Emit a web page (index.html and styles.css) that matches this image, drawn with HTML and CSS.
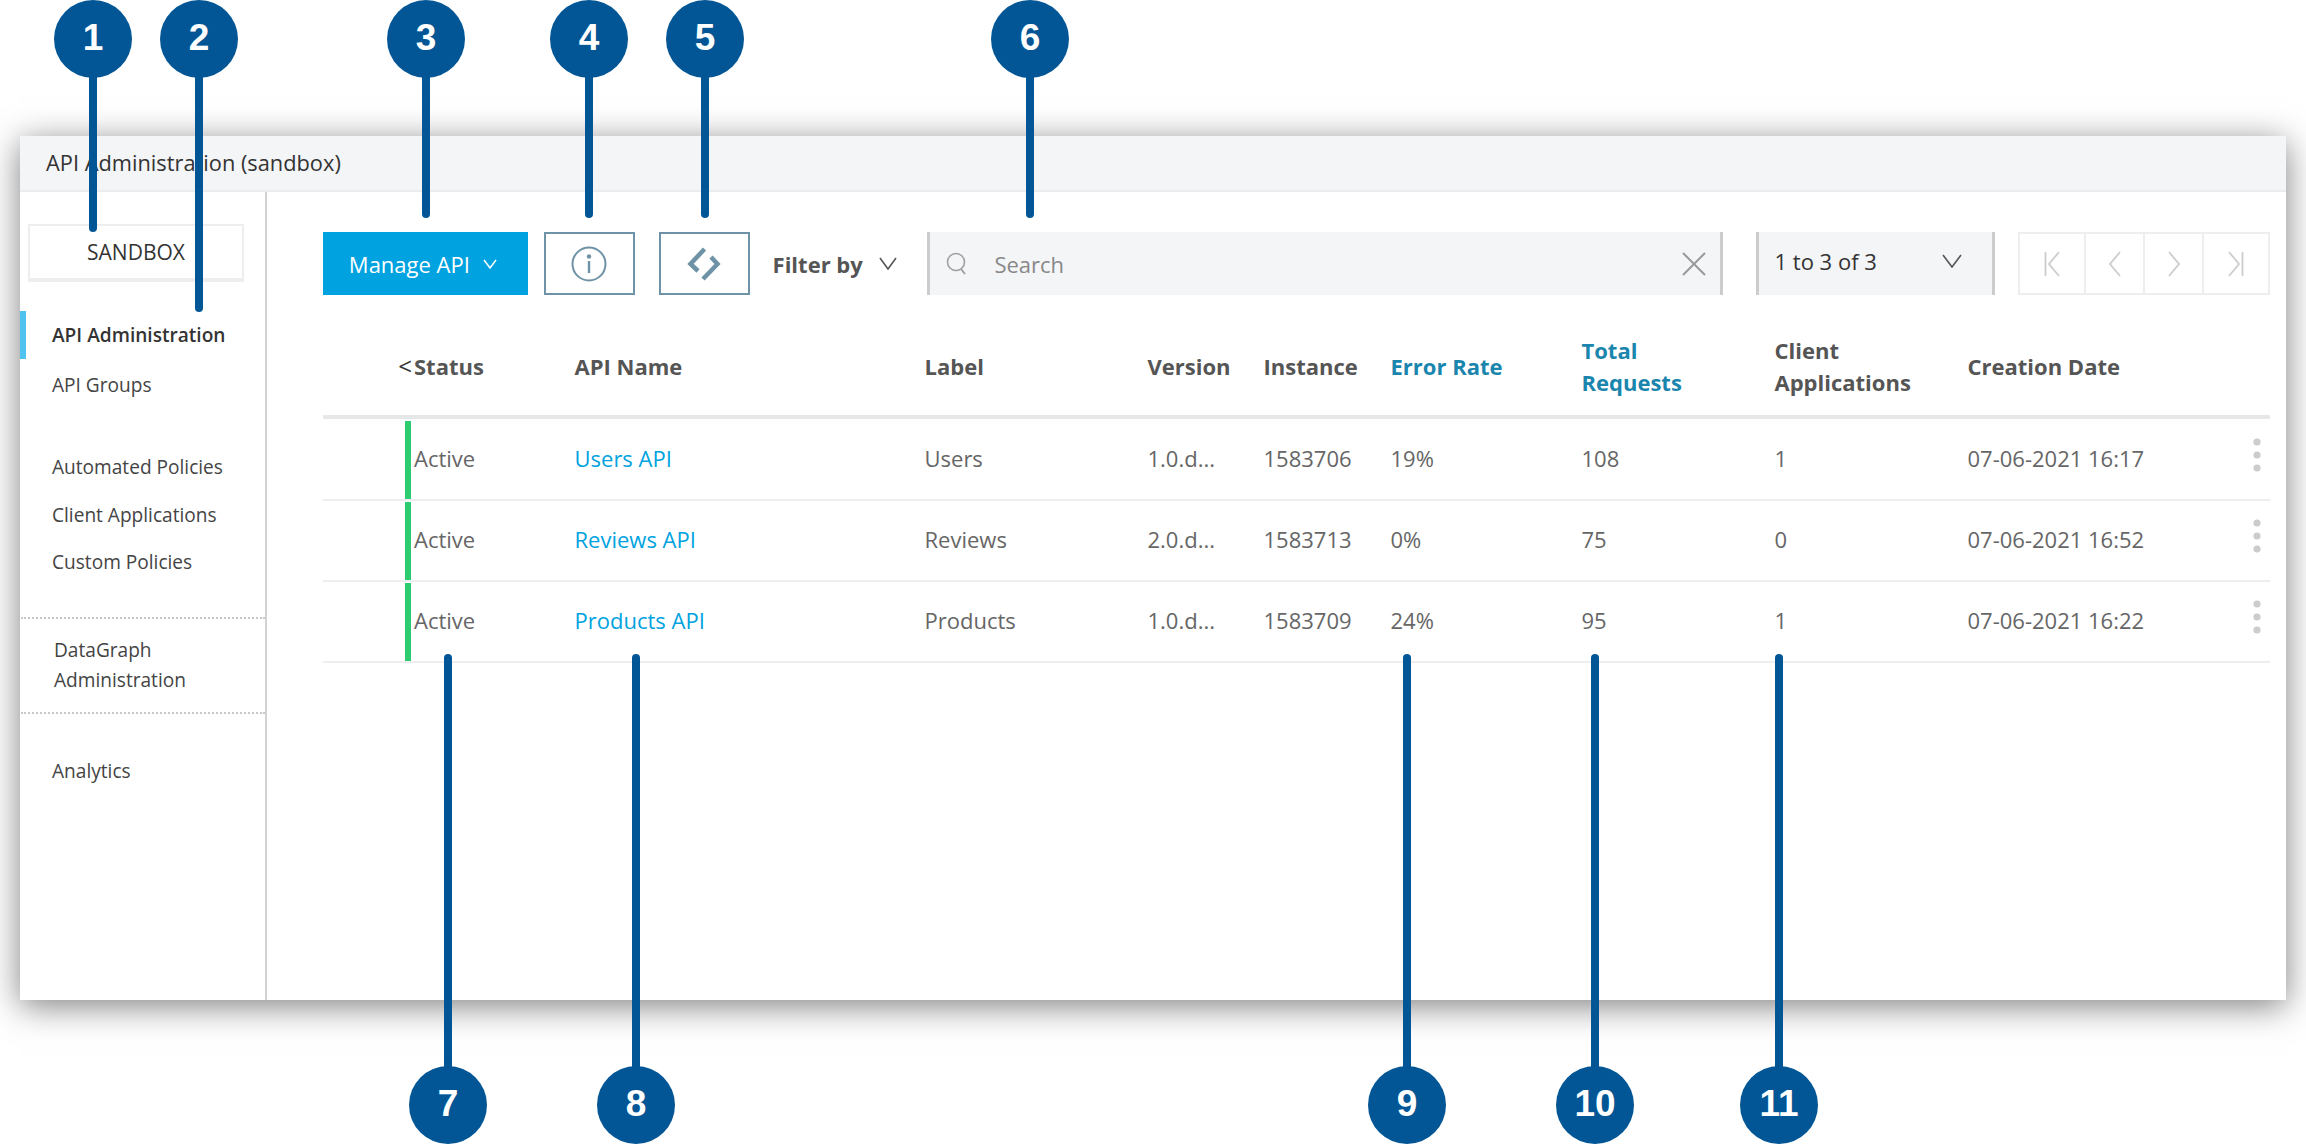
FILE: index.html
```html
<!DOCTYPE html>
<html lang="en">
<head>
    <meta charset="UTF-8">
    <title>API Administration (sandbox)</title>
    <link rel="stylesheet" href="styles.css">
</head>
<body>
    <div class="window">
        <div class="title-bar">API Administration (sandbox)</div>
        <div class="window-body">
            <nav class="sidebar">
                <div class="env-box">SANDBOX</div>
                <ul class="nav-group nav-group-first">
                    <li class="nav-item active">API Administration</li>
                    <li class="nav-item">API Groups</li>
                </ul>
                <ul class="nav-group nav-group-policies">
                    <li class="nav-item">Automated Policies</li>
                    <li class="nav-item">Client Applications</li>
                    <li class="nav-item">Custom Policies</li>
                </ul>
                <div class="nav-datagraph">DataGraph<br>Administration</div>
                <div class="nav-analytics">Analytics</div>
            </nav>

            <main class="content">
                <div class="toolbar">
                    <button class="manage-btn" type="button">
                        Manage API
                        <svg width="14" height="10" viewBox="0 0 14 10"><path d="M1 1l6 8 6-8" fill="none" stroke="#fff" stroke-width="1.5"/></svg>
                    </button>
                    <button class="icon-btn" type="button">
                        <svg width="36" height="36" viewBox="0 0 36 36">
                            <circle cx="18" cy="18" r="16.5" fill="none" stroke="#6f93a6" stroke-width="2"/>
                            <circle cx="18" cy="10.5" r="2.2" fill="#6f93a6"/>
                            <path d="M18 15v12" stroke="#6f93a6" stroke-width="2.4"/>
                        </svg>
                    </button>
                    <button class="icon-btn code-btn" type="button">
                        <svg width="36" height="36" viewBox="0 0 36 36">
                            <path d="M18.5 3L4.5 18l7.5 7M25 11l6.5 7L17 33" fill="none" stroke="#6f93a6" stroke-width="4.5"/>
                        </svg>
                    </button>
                    <div class="filter-by">
                        Filter by
                        <svg width="18" height="13" viewBox="0 0 18 13"><path d="M1 1l8 11 8-11" fill="none" stroke="#555" stroke-width="1.6"/></svg>
                    </div>
                    <div class="search">
                        <svg class="search-icon" width="22" height="24" viewBox="0 0 22 24">
                            <circle cx="10" cy="10" r="8.5" fill="none" stroke="#a0a0a0" stroke-width="1.6"/>
                            <path d="M15 17l4 5" stroke="#a0a0a0" stroke-width="2"/>
                        </svg>
                        <span class="search-text">Search</span>
                        <svg width="24" height="24" viewBox="0 0 24 24"><path d="M1 1l22 22M23 1L1 23" stroke="#999" stroke-width="2"/></svg>
                    </div>
                    <div class="page-select">
                        <span>1 to 3 of 3</span>
                        <svg width="20" height="14" viewBox="0 0 20 14"><path d="M1 1l9 12 9-12" fill="none" stroke="#555" stroke-width="1.6"/></svg>
                    </div>
                    <div class="pager">
                        <div class="pager-cell pager-first">
                            <svg width="16" height="26" viewBox="0 0 16 26"><path d="M1.5 1v24M15 1L5 13l10 12" fill="none" stroke="#ccc" stroke-width="1.8"/></svg>
                        </div>
                        <div class="pager-cell">
                            <svg width="12" height="26" viewBox="0 0 12 26"><path d="M11 1L1 13l10 12" fill="none" stroke="#ccc" stroke-width="1.8"/></svg>
                        </div>
                        <div class="pager-cell">
                            <svg width="12" height="26" viewBox="0 0 12 26"><path d="M1 1l10 12L1 25" fill="none" stroke="#ccc" stroke-width="1.8"/></svg>
                        </div>
                        <div class="pager-cell pager-last">
                            <svg width="16" height="26" viewBox="0 0 16 26"><path d="M14.5 1v24M1 1l10 12L1 25" fill="none" stroke="#ccc" stroke-width="1.8"/></svg>
                        </div>
                    </div>
                </div>

                <div class="table-head">
                    <div class="sort-mark">&lt;</div>
                    <div>Status</div>
                    <div>API Name</div>
                    <div>Label</div>
                    <div>Version</div>
                    <div>Instance</div>
                    <div class="sorted">Error Rate</div>
                    <div class="sorted">Total<br>Requests</div>
                    <div>Client<br>Applications</div>
                    <div>Creation Date</div>
                </div>

                <div class="table-row">
                    <div></div>
                    <div class="status">Active</div>
                    <div class="api-link">Users API</div>
                    <div>Users</div>
                    <div>1.0.d...</div>
                    <div>1583706</div>
                    <div>19%</div>
                    <div>108</div>
                    <div>1</div>
                    <div class="date-cell">07-06-2021 16:17
                        <svg class="dots" width="8" height="34" viewBox="0 0 8 34"><circle cx="4" cy="4" r="3.6"/><circle cx="4" cy="17" r="3.6"/><circle cx="4" cy="30" r="3.6"/></svg>
                    </div>
                </div>
                <div class="table-row">
                    <div></div>
                    <div class="status">Active</div>
                    <div class="api-link">Reviews API</div>
                    <div>Reviews</div>
                    <div>2.0.d...</div>
                    <div>1583713</div>
                    <div>0%</div>
                    <div>75</div>
                    <div>0</div>
                    <div class="date-cell">07-06-2021 16:52
                        <svg class="dots" width="8" height="34" viewBox="0 0 8 34"><circle cx="4" cy="4" r="3.6"/><circle cx="4" cy="17" r="3.6"/><circle cx="4" cy="30" r="3.6"/></svg>
                    </div>
                </div>
                <div class="table-row">
                    <div></div>
                    <div class="status">Active</div>
                    <div class="api-link">Products API</div>
                    <div>Products</div>
                    <div>1.0.d...</div>
                    <div>1583709</div>
                    <div>24%</div>
                    <div>95</div>
                    <div>1</div>
                    <div class="date-cell">07-06-2021 16:22
                        <svg class="dots" width="8" height="34" viewBox="0 0 8 34"><circle cx="4" cy="4" r="3.6"/><circle cx="4" cy="17" r="3.6"/><circle cx="4" cy="30" r="3.6"/></svg>
                    </div>
                </div>
            </main>
        </div>
    </div>

    <!-- numbered callouts over the screenshot -->
    <div class="pin pin-1"><span class="pin-num">1</span><span class="pin-line"></span></div>
    <div class="pin pin-2"><span class="pin-num">2</span><span class="pin-line"></span></div>
    <div class="pin pin-3"><span class="pin-num">3</span><span class="pin-line"></span></div>
    <div class="pin pin-4"><span class="pin-num">4</span><span class="pin-line"></span></div>
    <div class="pin pin-5"><span class="pin-num">5</span><span class="pin-line"></span></div>
    <div class="pin pin-6"><span class="pin-num">6</span><span class="pin-line"></span></div>
    <div class="pin pin-up pin-7"><span class="pin-line"></span><span class="pin-num">7</span></div>
    <div class="pin pin-up pin-8"><span class="pin-line"></span><span class="pin-num">8</span></div>
    <div class="pin pin-up pin-9"><span class="pin-line"></span><span class="pin-num">9</span></div>
    <div class="pin pin-up pin-10"><span class="pin-line"></span><span class="pin-num">10</span></div>
    <div class="pin pin-up pin-11"><span class="pin-line"></span><span class="pin-num">11</span></div>
</body>
</html>
```

FILE: styles.css
```css
html, body {
    height: 100%;
}

body {
    margin: 0;
    position: relative;
    overflow: hidden;
    background-color: #ffffff;
    font-family: "Open Sans", "Noto Sans", sans-serif;
    font-size: 22px;
    color: #666666;
}

.window {
    margin: 136px 20px 0;
    height: 864px;
    background-color: #ffffff;
    box-shadow: 0 6px 32px rgba(0, 0, 0, 0.5);
    display: flex;
    flex-direction: column;
}

.title-bar {
    height: 54px;
    flex: none;
    padding-left: 26px;
    line-height: 54px;
    font-size: 21.8px;
    background-color: #f4f5f7;
    border-bottom: 2px solid #ebecee;
    color: #333333;
}

.window-body {
    flex: 1;
    display: flex;
}

/* sidebar */
.sidebar {
    width: 245px;
    flex: none;
    border-right: 2px solid #d2d2d2;
    color: #444444;
    font-size: 19.1px;
}

.env-box {
    width: 212px;
    height: 52px;
    margin: 32px 0 0 8px;
    border: 2px solid #eeeeee;
    border-bottom-width: 4px;
    text-align: center;
    line-height: 53px;
    font-size: 21px;
    color: #333333;
}

.nav-group {
    list-style: none;
    margin: 0;
    padding: 0;
}

.nav-group-first {
    margin-top: 29px;
}

.nav-group-policies {
    margin-top: 35px;
}

.nav-item {
    padding-left: 32px;
    height: 48px;
    line-height: 48px;
}

.nav-group-policies .nav-item {
    height: 47.5px;
    line-height: 47.5px;
}

.nav-item.active {
    border-left: 6px solid #4fc3f0;
    padding-left: 26px;
    font-weight: 600;
    color: #333333;
    margin-bottom: 2px;
}

.nav-datagraph {
    margin: 30px 0 0 1px;
    padding: 16px 0 17px 33px;
    line-height: 30px;
    border-top: 2px dotted #c8c8c8;
    border-bottom: 2px dotted #c8c8c8;
}

.nav-analytics {
    margin-top: 42px;
    padding-left: 32px;
    line-height: 30px;
}

/* main area */
.content {
    flex: 1;
    padding: 40px 16px 0 56px;
    min-width: 0;
}

.toolbar {
    display: flex;
    height: 63px;
}

.toolbar button {
    font-family: inherit;
    padding: 0;
    margin: 0;
}

.manage-btn {
    width: 205px;
    border: none;
    background-color: #00a3e0;
    color: #ffffff;
    font-size: 22px;
    display: flex;
    align-items: center;
    justify-content: center;
    gap: 13px;
    padding-right: 5px !important;
}

.icon-btn {
    width: 91px;
    margin-left: 16px !important;
    border: 2px solid #6f93a6;
    background-color: #ffffff;
    display: flex;
    align-items: center;
    justify-content: center;
}

.code-btn {
    margin-left: 24px !important;
}

.filter-by {
    margin-left: 23px;
    width: 155px;
    display: flex;
    align-items: center;
    gap: 16px;
    font-weight: 700;
    color: #555555;
}

.search {
    width: 796px;
    box-sizing: border-box;
    display: flex;
    align-items: center;
    padding: 0 14px 0 16px;
    background-color: #f4f5f7;
    border-left: 3px solid #cccccc;
    border-right: 3px solid #cccccc;
}

.search-text {
    flex: 1;
    margin-left: 26px;
    color: #888888;
}

.page-select {
    width: 240px;
    margin-left: 33px;
    box-sizing: border-box;
    display: flex;
    align-items: center;
    justify-content: space-between;
    padding: 0 30px 6px 16px;
    background-color: #f4f5f7;
    border-left: 3px solid #cccccc;
    border-right: 3px solid #cccccc;
    color: #333333;
}

.pager {
    width: 252px;
    margin-left: 23px;
    box-sizing: border-box;
    display: flex;
    border: 2px solid #eeeeee;
}

.pager-cell {
    flex: 1;
    display: flex;
    align-items: center;
    justify-content: center;
    border-left: 2px solid #eeeeee;
}

.pager-first {
    flex: none;
    width: 64px;
    border-left: none;
}

.pager-last {
    flex: none;
    width: 64px;
}

/* table */
.table-head,
.table-row {
    display: grid;
    grid-template-columns: 82px 169.5px 350px 223px 116px 127px 191px 193px 193px 303.5px;
}

.table-head {
    height: 98px;
    margin-top: 22px;
    margin-bottom: 1px;
    align-items: center;
    border-bottom: 4px solid #e6e7e9;
    font-weight: 700;
    line-height: 32px;
    color: #555555;
}

.table-head > div:nth-child(2) {
    padding-left: 9px;
}

.sort-mark {
    justify-self: end;
    margin-right: -7px;
    font-size: 24px;
    font-weight: 400;
    color: #333333;
}

.sorted {
    color: #1a85ad;
}

.table-row {
    height: 81px;
    box-sizing: border-box;
    align-items: center;
    padding-bottom: 3px;
    border-bottom: 2px solid #eeeeee;
}

.status {
    align-self: stretch;
    margin: 1px 0 -3px;
    padding: 0 0 5px 3px;
    display: flex;
    align-items: center;
    border-left: 6px solid #2ecc71;
}

.api-link {
    color: #00a3e0;
}

.date-cell {
    display: flex;
    align-items: center;
    justify-content: space-between;
    padding-right: 10px;
}

.dots {
    fill: #cccccc;
    margin-top: -6px;
}

/* callouts */
.pin {
    position: absolute;
    display: flex;
    flex-direction: column;
    align-items: center;
    width: 78px;
    top: 0;
}

.pin-num {
    width: 78px;
    height: 78px;
    flex: none;
    border-radius: 50%;
    background-color: #025695;
    color: #ffffff;
    font-family: "Liberation Sans", Arial, sans-serif;
    font-size: 37px;
    font-weight: 700;
    line-height: 76px;
    text-align: center;
}

.pin-line {
    width: 7.5px;
    flex: none;
    background-color: #025695;
    border-radius: 0 0 4px 4px;
    margin-top: -2px;
}

.pin-up .pin-line {
    border-radius: 4px 4px 0 0;
    margin-top: 0;
    margin-bottom: -2px;
    height: 414px;
}

.pin-up {
    top: 654px;
}

.pin-1 { left: 54px; }
.pin-1 .pin-line { height: 156px; }
.pin-2 { left: 160px; }
.pin-2 .pin-line { height: 236px; }
.pin-3 { left: 387px; }
.pin-3 .pin-line { height: 142px; }
.pin-4 { left: 550px; }
.pin-4 .pin-line { height: 142px; }
.pin-5 { left: 666px; }
.pin-5 .pin-line { height: 142px; }
.pin-6 { left: 991px; }
.pin-6 .pin-line { height: 142px; }
.pin-7 { left: 409px; }
.pin-8 { left: 597px; }
.pin-9 { left: 1368px; }
.pin-10 { left: 1556px; }
.pin-11 { left: 1740px; }
```
